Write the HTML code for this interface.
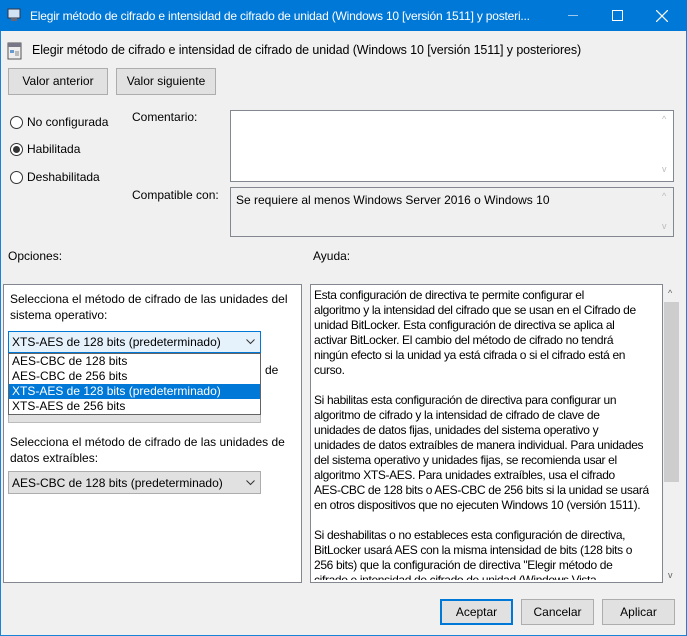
<!DOCTYPE html>
<html><head><meta charset="utf-8"><style>
*{box-sizing:border-box;margin:0;padding:0}
body{width:687px;height:636px;overflow:hidden;background:#f0f0f0;font-family:"Liberation Sans",sans-serif;font-size:12px;color:#000;position:relative}
.a{position:absolute;white-space:nowrap}
.win{position:absolute;left:0;top:0;width:687px;height:636px;border:1px solid #1883d7}
.title{position:absolute;left:0;top:0;width:687px;height:31px;background:#0078d7;color:#fff}
.btn{position:absolute;background:#e1e1e1;border:1px solid #adadad;text-align:center;line-height:25px;font-size:12px}
.box{position:absolute;background:#fff;border:1px solid #828790}
.radio{position:absolute;width:13px;height:13px;border:1px solid #333;border-radius:50%;background:#fff}
.help{position:absolute;left:314px;top:288px;line-height:15px;font-size:12px;white-space:nowrap;letter-spacing:-0.35px}
</style></head><body>
<div class="win"></div>
<div class="title">
 <svg class="a" style="left:7px;top:8px" width="14" height="14"><rect x="1" y="1" width="12" height="9" fill="#cfe3f5" stroke="#334"/><rect x="4" y="10" width="6" height="3" fill="#667"/></svg>
 <div class="a" style="left:30px;top:9px;font-size:12px;letter-spacing:-0.2px">Elegir método de cifrado e intensidad de cifrado de unidad (Windows 10 [versión 1511] y posteri...</div>
 <div class="a" style="left:568px;top:15px;width:10px;height:1px;background:#9cc8ee"></div>
 <div class="a" style="left:612px;top:10px;width:11px;height:11px;border:1px solid #fff"></div>
 <svg class="a" style="left:656px;top:10px" width="12" height="12"><path d="M0 0L12 12M12 0L0 12" stroke="#fff" stroke-width="1.2"/></svg>
</div>
<svg class="a" style="left:7px;top:42px" width="16" height="18"><rect x="1" y="1" width="13" height="16" fill="#eee" stroke="#555"/><rect x="1" y="1" width="13" height="4" fill="#778"/><rect x="3" y="8" width="4" height="3" fill="#69c"/><rect x="8" y="9" width="4" height="5" fill="#bbb"/></svg>
<div class="a" style="left:32px;top:43px;font-size:12.5px;letter-spacing:-0.1px">Elegir método de cifrado e intensidad de cifrado de unidad (Windows 10 [versión 1511] y posteriores)</div>
<div class="btn" style="left:8px;top:68px;width:100px;height:27px">Valor anterior</div>
<div class="btn" style="left:116px;top:68px;width:100px;height:27px">Valor siguiente</div>

<div class="radio" style="left:10px;top:116px"></div><div class="a" style="left:27px;top:115px">No configurada</div>
<div class="radio" style="left:10px;top:143px"></div><div class="a" style="left:13px;top:146px;width:7px;height:7px;border-radius:50%;background:#333"></div><div class="a" style="left:27px;top:142px">Habilitada</div>
<div class="radio" style="left:10px;top:171px"></div><div class="a" style="left:27px;top:170px">Deshabilitada</div>

<div class="a" style="left:132px;top:110px">Comentario:</div>
<div class="box" style="left:230px;top:110px;width:444px;height:72px"></div>
<div class="a" style="left:662px;top:114px;color:#bbb;font-size:9px">^</div>
<div class="a" style="left:662px;top:164px;color:#bbb;font-size:9px">v</div>
<div class="a" style="left:132px;top:188px">Compatible con:</div>
<div class="a" style="left:230px;top:187px;width:444px;height:50px;border:1px solid #828790;background:#f0f0f0"></div>
<div class="a" style="left:236px;top:193px">Se requiere al menos Windows Server 2016 o Windows 10</div>
<div class="a" style="left:662px;top:191px;color:#bbb;font-size:9px">^</div>
<div class="a" style="left:662px;top:221px;color:#bbb;font-size:9px">v</div>

<div class="a" style="left:8px;top:249px">Opciones:</div>
<div class="a" style="left:313px;top:249px">Ayuda:</div>

<div class="box" style="left:3px;top:284px;width:299px;height:299px;border-color:#828790"></div>
<div class="a" style="left:10px;top:291px;line-height:16px">Selecciona el método de cifrado de las unidades del<br>sistema operativo:</div>
<div class="a" style="left:8px;top:331px;width:253px;height:22px;background:#e5f1fb;border:1px solid #0078d7"></div>
<div class="a" style="left:12px;top:335px">XTS-AES de 128 bits (predeterminado)</div>
<svg class="a" style="left:246px;top:339px" width="9" height="6"><path d="M0.5 0.5L4.5 4.5L8.5 0.5" fill="none" stroke="#333"/></svg>
<div class="a" style="left:265px;top:363px">de</div>
<div class="a" style="left:8px;top:400px;width:253px;height:23px;background:#e1e1e1;border:1px solid #bbb"></div>
<div class="a" style="left:8px;top:353px;width:253px;height:62px;background:#fff;border:1px solid #646464"></div>
<div class="a" style="left:12px;top:354px;line-height:15px">AES-CBC de 128 bits<br>AES-CBC de 256 bits</div>
<div class="a" style="left:9px;top:384px;width:251px;height:15px;background:#0078d7"></div>
<div class="a" style="left:12px;top:384px;line-height:15px;color:#fff">XTS-AES de 128 bits (predeterminado)</div>
<div class="a" style="left:12px;top:399px;line-height:15px">XTS-AES de 256 bits</div>
<div class="a" style="left:10px;top:434px;line-height:16px">Selecciona el método de cifrado de las unidades de<br>datos extraíbles:</div>
<div class="a" style="left:8px;top:471px;width:253px;height:23px;background:#e1e1e1;border:1px solid #adadad"></div>
<div class="a" style="left:12px;top:476px">AES-CBC de 128 bits (predeterminado)</div>
<svg class="a" style="left:246px;top:480px" width="9" height="6"><path d="M0.5 0.5L4.5 4.5L8.5 0.5" fill="none" stroke="#333"/></svg>

<div class="box" style="left:310px;top:284px;width:353px;height:299px;overflow:hidden"></div>
<div class="help" style="height:292px;overflow:hidden">Esta configuración de directiva te permite configurar el<br>algoritmo y la intensidad del cifrado que se usan en el Cifrado de<br>unidad BitLocker. Esta configuración de directiva se aplica al<br>activar BitLocker. El cambio del método de cifrado no tendrá<br>ningún efecto si la unidad ya está cifrada o si el cifrado está en<br>curso.<br><br>Si habilitas esta configuración de directiva para configurar un<br>algoritmo de cifrado y la intensidad de cifrado de clave de<br>unidades de datos fijas, unidades del sistema operativo y<br>unidades de datos extraíbles de manera individual. Para unidades<br>del sistema operativo y unidades fijas, se recomienda usar el<br>algoritmo XTS-AES. Para unidades extraíbles, usa el cifrado<br>AES-CBC de 128 bits o AES-CBC de 256 bits si la unidad se usará<br>en otros dispositivos que no ejecuten Windows 10 (versión 1511).<br><br>Si deshabilitas o no estableces esta configuración de directiva,<br>BitLocker usará AES con la misma intensidad de bits (128 bits o<br>256 bits) que la configuración de directiva "Elegir método de<br>cifrado e intensidad de cifrado de unidad (Windows Vista</div>
<div class="a" style="left:663px;top:284px;width:17px;height:299px;background:#f0f0f0"></div>
<div class="a" style="left:664px;top:302px;width:15px;height:180px;background:#cdcdcd"></div>
<div class="a" style="left:668px;top:288px;color:#606060;font-size:9px">^</div>
<div class="a" style="left:668px;top:570px;color:#606060;font-size:9px">v</div>

<div class="btn" style="left:440px;top:599px;width:73px;height:26px;border:2px solid #0078d7;line-height:22px">Aceptar</div>
<div class="btn" style="left:521px;top:599px;width:73px;height:26px">Cancelar</div>
<div class="btn" style="left:602px;top:599px;width:73px;height:26px">Aplicar</div>
</body></html>
